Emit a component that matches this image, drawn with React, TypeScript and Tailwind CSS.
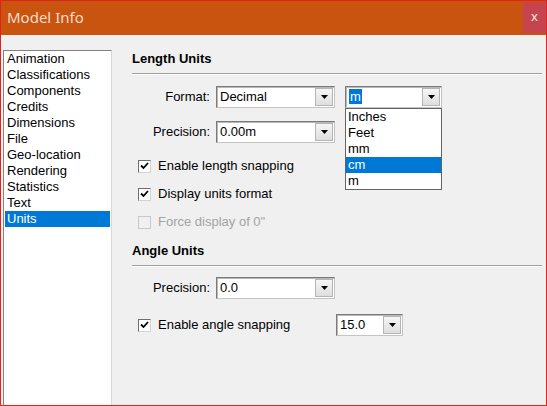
import React from "react";

const F = { fontFamily: '"Liberation Sans", Arial, sans-serif' };

function Arrow() {
  return (
    <svg width="7" height="4" viewBox="0 0 7 4">
      <path d="M0 0 H7 L3.5 4 Z" fill="#000" />
    </svg>
  );
}

function Combo({ w, value, highlight }: { w: number; value: string; highlight?: boolean }) {
  return (
    <div
      className="relative flex h-[22px] items-center border border-t-[#7a7a7a] border-l-[#7a7a7a] border-r-[#c4c4c4] border-b-[#c4c4c4] bg-white shadow-[inset_1px_1px_0_#b9b9b9]"
      style={{ width: w }}
    >
      <div className="flex-1 pl-[3px] text-[13px] leading-[16px] text-black">
        {highlight ? (
          <span className="bg-[#0078d7] px-[1px] text-white">{value}</span>
        ) : (
          value
        )}
      </div>
      <div className="mr-[1px] flex h-[18px] w-[18px] items-center justify-center border border-[#b5b5b5] bg-gradient-to-b from-[#f6f6f6] to-[#dedede]">
        <Arrow />
      </div>
    </div>
  );
}

function Check({ checked, disabled }: { checked?: boolean; disabled?: boolean }) {
  return (
    <div
      className={
        disabled
          ? "flex h-[13px] w-[13px] items-center justify-center border border-[#c8c8c8] bg-[#f0f0f0]"
          : "flex h-[13px] w-[13px] items-center justify-center border border-t-[#6e6e6e] border-l-[#6e6e6e] border-r-[#d4d4d4] border-b-[#d4d4d4] bg-white"
      }
    >
      {checked && (
        <svg width="9" height="8" viewBox="0 0 9 8">
          <path d="M1 3.5 L3.5 6 L8 1" stroke="#000" strokeWidth="1.8" fill="none" />
        </svg>
      )}
    </div>
  );
}

const items = [
  "Animation",
  "Classifications",
  "Components",
  "Credits",
  "Dimensions",
  "File",
  "Geo-location",
  "Rendering",
  "Statistics",
  "Text",
  "Units",
];

export default function App() {
  return (
    <div
      className="flex h-[406px] w-[547px] flex-col overflow-hidden border border-[#e2231a] bg-[#f0f0f0]"
      style={F}
    >
      <div className="flex h-[34px] shrink-0 items-start justify-between bg-[#c9540f]">
        <div
          className="pl-[6px] pt-[6px] text-[15px] leading-[20px] text-[#f7dccb]"
          style={{ fontFamily: '"Noto Sans", "Open Sans", sans-serif' }}
        >
          Model Info
        </div>
        <div
          className="mt-[1px] flex h-[31px] w-[23px] items-center justify-center bg-[#c5444d] pb-[2px] text-[13px] text-[#f7e6e6]"
          style={{ fontFamily: '"Noto Sans", sans-serif' }}
        >
          x
        </div>
      </div>
      <div className="flex flex-1">
        <div className="ml-[2px] mt-[15px] w-[109px] border border-t-[#828282] border-l-[#828282] border-r-[#d8d8d8] border-b-0 bg-white">
          {items.map((it) => (
            <div
              key={it}
              className={
                it === "Units"
                  ? "mx-[1px] h-[16px] bg-[#0078d7] pl-[2px] text-[13px] leading-[16px] text-white"
                  : "h-[16px] pl-[3px] text-[13px] leading-[16px] text-black"
              }
            >
              {it}
            </div>
          ))}
        </div>
        <div className="ml-[20px] flex flex-1 flex-col pt-[16px] pr-[4px]">
          <div className="h-[16px] text-[13px] font-bold leading-[16px] text-black">Length Units</div>
          <div className="mt-[6px] h-[2px] border-t border-t-[#a0a0a0] border-b border-b-white" />
          <div className="mt-[11px] flex items-center">
            <div className="w-[78px] text-right text-[13px] leading-[16px] text-black">Format:</div>
            <div className="ml-[6px]">
              <Combo w={119} value="Decimal" />
            </div>
            <div className="relative ml-[10px]">
              <Combo w={97} value="m" highlight />
              <div className="absolute left-0 top-full z-10 w-[97px] border border-[#646464] bg-white">
                {["Inches", "Feet", "mm", "cm", "m"].map((u) => (
                  <div
                    key={u}
                    className={
                      u === "cm"
                        ? "h-[16px] bg-[#0078d7] pl-[2px] text-[13px] leading-[16px] text-white"
                        : "h-[16px] pl-[2px] text-[13px] leading-[16px] text-black"
                    }
                  >
                    {u}
                  </div>
                ))}
              </div>
            </div>
          </div>
          <div className="mt-[13px] flex items-center">
            <div className="w-[78px] text-right text-[13px] leading-[16px] text-black">Precision:</div>
            <div className="ml-[6px]">
              <Combo w={119} value="0.00m" />
            </div>
          </div>
          <div className="mt-[15px] flex h-[16px] items-center pl-[6px]">
            <Check checked />
            <span className="ml-[7px] text-[13px] leading-[16px] text-black">Enable length snapping</span>
          </div>
          <div className="mt-[12px] flex h-[16px] items-center pl-[6px]">
            <Check checked />
            <span className="ml-[7px] text-[13px] leading-[16px] text-black">Display units format</span>
          </div>
          <div className="mt-[12px] flex h-[16px] items-center pl-[6px]">
            <Check disabled />
            <span className="ml-[7px] text-[13px] leading-[16px] text-[#a3a3a3]">Force display of 0"</span>
          </div>
          <div className="mt-[13px] h-[16px] text-[13px] font-bold leading-[16px] text-black">Angle Units</div>
          <div className="mt-[6px] h-[2px] border-t border-t-[#a0a0a0] border-b border-b-white" />
          <div className="mt-[10px] flex items-center">
            <div className="w-[78px] text-right text-[13px] leading-[16px] text-black">Precision:</div>
            <div className="ml-[6px]">
              <Combo w={119} value="0.0" />
            </div>
          </div>
          <div className="mt-[15px] flex h-[22px] items-center pl-[6px]">
            <Check checked />
            <span className="ml-[7px] w-[178px] text-[13px] leading-[16px] text-black">Enable angle snapping</span>
            <Combo w={67} value="15.0" />
          </div>
        </div>
      </div>
    </div>
  );
}
